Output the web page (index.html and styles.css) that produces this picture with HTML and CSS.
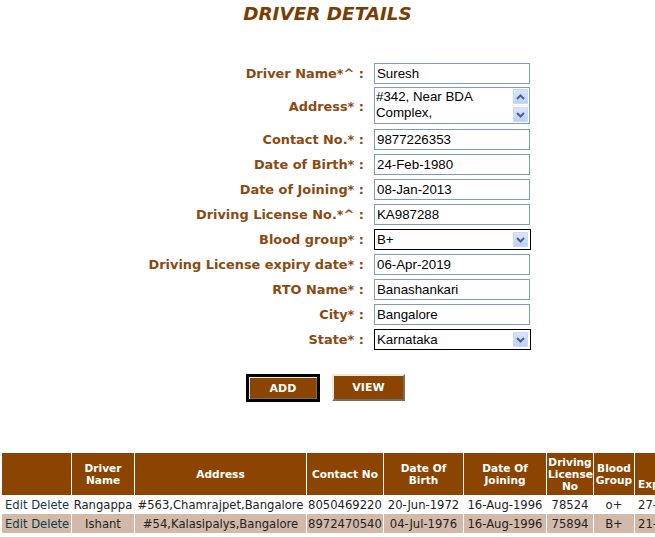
FILE: index.html
```html
<!DOCTYPE html>
<html>
<head>
<meta charset="utf-8">
<link rel="stylesheet" href="styles.css">
</head>
<body>
<div class="page">
  <h1 class="title">DRIVER DETAILS</h1>
  <form class="form">
    <label class="lbl">Driver Name*^ :</label>
    <div class="fld"><input class="txt" value="Suresh"></div>

    <label class="lbl lbl-area">Address* :</label>
    <div class="fld fld-area">
      <div class="area">
        <textarea class="area-text">#342, Near BDA Complex,</textarea>
        <div class="scroll">
          <span class="arrow-btn"><svg width="9" height="6" viewBox="0 0 9 6"><path d="M1 5 L4.5 1.5 L8 5" fill="none" stroke="#4d6185" stroke-width="2"/></svg></span>
          <span class="arrow-btn"><svg width="9" height="6" viewBox="0 0 9 6"><path d="M1 1 L4.5 4.5 L8 1" fill="none" stroke="#4d6185" stroke-width="2"/></svg></span>
        </div>
      </div>
    </div>

    <label class="lbl">Contact No.* :</label>
    <div class="fld"><input class="txt" value="9877226353"></div>

    <label class="lbl">Date of Birth* :</label>
    <div class="fld"><input class="txt" value="24-Feb-1980"></div>

    <label class="lbl">Date of Joining* :</label>
    <div class="fld"><input class="txt" value="08-Jan-2013"></div>

    <label class="lbl">Driving License No.*^ :</label>
    <div class="fld"><input class="txt" value="KA987288"></div>

    <label class="lbl">Blood group* :</label>
    <div class="fld">
      <div class="sel">
        <span class="sel-text">B+</span>
        <span class="arrow-btn sel-btn"><svg width="9" height="6" viewBox="0 0 9 6"><path d="M1 1 L4.5 4.5 L8 1" fill="none" stroke="#4d6185" stroke-width="2"/></svg></span>
      </div>
    </div>

    <label class="lbl">Driving License expiry date* :</label>
    <div class="fld"><input class="txt" value="06-Apr-2019"></div>

    <label class="lbl">RTO Name* :</label>
    <div class="fld"><input class="txt" value="Banashankari"></div>

    <label class="lbl">City* :</label>
    <div class="fld"><input class="txt" value="Bangalore"></div>

    <label class="lbl">State* :</label>
    <div class="fld">
      <div class="sel">
        <span class="sel-text">Karnataka</span>
        <span class="arrow-btn sel-btn"><svg width="9" height="6" viewBox="0 0 9 6"><path d="M1 1 L4.5 4.5 L8 1" fill="none" stroke="#4d6185" stroke-width="2"/></svg></span>
      </div>
    </div>
  </form>

  <div class="actions">
    <button type="button" class="btn btn-default">ADD</button>
    <button type="button" class="btn">VIEW</button>
  </div>

  <div class="grid-wrap">
    <table class="grid">
      <colgroup>
        <col class="c1"><col class="c2"><col class="c3"><col class="c4"><col class="c5"><col class="c6"><col class="c7"><col class="c8"><col class="c9"><col class="c10"><col class="c11"><col class="c12">
      </colgroup>
      <thead>
        <tr>
          <th></th>
          <th>Driver Name</th>
          <th>Address</th>
          <th>Contact No</th>
          <th>Date Of Birth</th>
          <th>Date Of Joining</th>
          <th>Driving License No</th>
          <th>Blood Group</th>
          <th class="bottom">Expiry Date</th>
          <th>RTO Name</th>
          <th>City</th>
          <th>State</th>
        </tr>
      </thead>
      <tbody>
        <tr>
          <td class="left"><a href="#">Edit</a> <a href="#">Delete</a></td>
          <td>Rangappa</td>
          <td>#563,Chamrajpet,Bangalore</td>
          <td>8050469220</td>
          <td>20-Jun-1972</td>
          <td>16-Aug-1996</td>
          <td>78524</td>
          <td>o+</td>
          <td class="left">27-Mar-2016</td>
          <td>Rajajinagar</td>
          <td>Bangalore</td>
          <td>Karnataka</td>
        </tr>
        <tr class="alt">
          <td class="left"><a href="#">Edit</a> <a href="#">Delete</a></td>
          <td>Ishant</td>
          <td>#54,Kalasipalys,Bangalore</td>
          <td>8972470540</td>
          <td>04-Jul-1976</td>
          <td>16-Aug-1996</td>
          <td>75894</td>
          <td>B+</td>
          <td class="left">21-Sep-2017</td>
          <td>Jayanagar</td>
          <td>Bangalore</td>
          <td>Karnataka</td>
        </tr>
      </tbody>
    </table>
  </div>
</div>
</body>
</html>
```

FILE: styles.css
```css
html, body {
  margin: 0;
  padding: 0;
  background: #ffffff;
  overflow: hidden;
}

.page {
  width: 655px;
  height: 537px;
  overflow: hidden;
  font-family: "DejaVu Sans", Verdana, sans-serif;
}

.title {
  margin: 0;
  padding-top: 3px;
  height: 58px;
  text-align: center;
  font-size: 18.4px;
  font-weight: bold;
  font-style: italic;
  color: #7a3c00;
  line-height: 22px;
}

.form {
  display: grid;
  grid-template-columns: 224px 160px;
  column-gap: 10px;
  margin: 0 0 0 140px;
  padding-top: 0;
}

.lbl {
  text-align: right;
  font-size: 12.9px;
  font-weight: bold;
  color: #8b4a12;
  height: 25px;
  line-height: 26px;
  white-space: nowrap;
}

.lbl-area {
  height: 41px;
  line-height: 41px;
}

.fld {
  padding-top: 2px;
  height: 25px;
  box-sizing: border-box;
}

.fld-area {
  height: 41px;
  padding-top: 1px;
}

.txt {
  box-sizing: border-box;
  width: 156px;
  height: 21px;
  margin: 0;
  padding: 1px 2px;
  border: 1px solid #7f9db9;
  font-family: "Liberation Sans", Arial, sans-serif;
  font-size: 13.3px;
  color: #000;
  background: #fff;
  outline: none;
}

.area {
  display: flex;
  box-sizing: border-box;
  width: 156px;
  height: 37px;
  border: 1px solid #7f9db9;
  background: #fff;
}

.area-text {
  flex: 1;
  margin: 0;
  padding: 1px 1px;
  border: none;
  resize: none;
  overflow: hidden;
  font-family: "Liberation Sans", Arial, sans-serif;
  font-size: 13.3px;
  line-height: 16px;
  color: #000;
  outline: none;
}

.scroll {
  width: 17px;
  display: flex;
  flex-direction: column;
  justify-content: space-between;
  background: #f4f3ee;
}

.arrow-btn {
  display: flex;
  align-items: center;
  justify-content: center;
  box-sizing: border-box;
  width: 17px;
  height: 17px;
  border: 1px solid #ffffff;
  border-radius: 2px;
  background: linear-gradient(#dbe6fd, #bccffa);
  box-shadow: inset 0 0 0 1px #c9d8fc;
}

.sel {
  display: flex;
  align-items: center;
  box-sizing: border-box;
  width: 157px;
  height: 21px;
  border: 1px solid #000;
  background: #fff;
  font-family: "Liberation Sans", Arial, sans-serif;
  font-size: 13.3px;
}

.sel-text {
  flex: 1;
  padding-left: 2px;
}

.sel-btn {
  width: 17px;
  height: 17px;
  margin-right: 1px;
}

.actions {
  display: flex;
  gap: 12px;
  margin: 22px 0 0 246px;
  align-items: flex-start;
}

.btn {
  box-sizing: border-box;
  width: 73px;
  height: 27px;
  margin: 0;
  padding: 0;
  background: #8b4500;
  color: #ffffff;
  font-family: "DejaVu Sans", Verdana, sans-serif;
  font-size: 11px;
  font-weight: bold;
  border: 2px solid;
  border-color: #ece9d8 #716f64 #716f64 #ece9d8;
}

.btn-default {
  width: 74px;
  height: 28px;
  border: 3px solid #000;
  box-shadow: inset 1px 1px 0 #ece9d8, inset -1px -1px 0 #716f64;
}

.grid-wrap {
  margin-top: 50px;
  padding-left: 1px;
}

.grid {
  table-layout: fixed;
  border-collapse: separate;
  border-spacing: 1px;
  width: 968px;
}

.c1 { width: 69px; }
.c2 { width: 62px; }
.c3 { width: 171px; }
.c4 { width: 76px; }
.c5 { width: 79px; }
.c6 { width: 82px; }
.c7 { width: 46px; }
.c8 { width: 40px; }
.c9 { width: 80px; }
.c10 { width: 90px; }
.c11 { width: 80px; }
.c12 { width: 80px; }

.grid thead tr {
  height: 42px;
}

.grid th {
  background: #8b4500;
  color: #ffffff;
  font-size: 10.6px;
  font-weight: bold;
  padding: 0 1px;
  line-height: 12px;
  text-align: center;
  vertical-align: middle;
  overflow: hidden;
}

.grid th.bottom {
  vertical-align: bottom;
  text-align: left;
  padding: 0 0 5px 3px;
}

.grid tbody tr {
  height: 17px;
}

.grid td {
  padding: 0 1px;
  font-size: 11.6px;
  text-align: center;
  white-space: nowrap;
  overflow: hidden;
  color: #222;
  line-height: 16px;
}

.grid td.left {
  text-align: left;
  padding-left: 3px;
}

.grid tr.alt {
  height: 19px;
}

.grid tr.alt td {
  background: #d2b9a8;
}

.grid a {
  color: #0f3b4a;
  text-decoration: none;
}
```
